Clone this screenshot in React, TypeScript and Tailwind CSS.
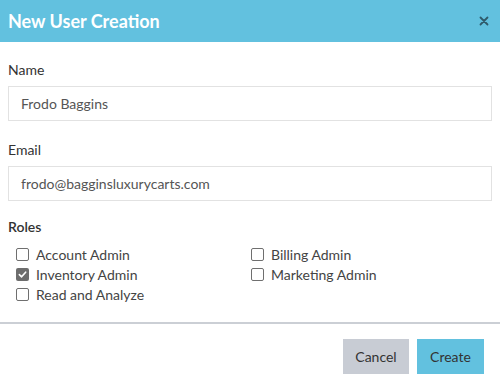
import React from "react";

function Box({ checked }: { checked?: boolean }) {
  if (checked) {
    return (
      <span className="w-[13px] h-[13px] rounded-[2px] bg-[#6d6d6d] flex items-center justify-center shrink-0">
        <svg width="9" height="9" viewBox="0 0 10 10">
          <path d="M1.5 5.2 L4 7.6 L8.5 2.4" stroke="#fff" strokeWidth="1.8" fill="none" strokeLinecap="round" strokeLinejoin="round" />
        </svg>
      </span>
    );
  }
  return <span className="w-[13px] h-[13px] rounded-[2px] border border-[#6f6f6f] bg-white shrink-0" />;
}

function Role({ label, checked }: { label: string; checked?: boolean }) {
  return (
    <label className="flex items-center gap-[7px] h-[20px] text-[14px] text-[#444]">
      <Box checked={checked} />
      <span>{label}</span>
    </label>
  );
}

export default function App() {
  return (
    <div className="w-[500px] h-[390px] bg-white flex flex-col" style={{ fontFamily: '"Lato", "Noto Sans", sans-serif' }}>
      <div className="h-[42px] bg-[#62c1df] flex items-center justify-between pl-[8px] pr-[11px] shrink-0">
        <span className="text-white text-[18px] font-bold">New User Creation</span>
        <svg width="10" height="10" viewBox="0 0 10 10">
          <path d="M1.5 1.5 L8.5 8.5 M8.5 1.5 L1.5 8.5" stroke="#2f5a6a" strokeWidth="1.8" strokeLinecap="round" />
        </svg>
      </div>
      <div className="px-[8px] pt-[18px] flex flex-col">
        <div className="text-[14px] text-[#333] leading-[20px]">Name</div>
        <div className="mt-[6px] h-[35px] border border-[#e2e2e2] flex items-center px-[12px] text-[14px] text-[#555]">Frodo Baggins</div>
        <div className="mt-[19px] text-[14px] text-[#333] leading-[20px]">Email</div>
        <div className="mt-[6px] h-[35px] border border-[#e2e2e2] flex items-center px-[12px] text-[14px] text-[#555]">frodo@bagginsluxurycarts.com</div>
        <div className="mt-[16px] text-[14px] font-semibold text-[#333] leading-[20px]">Roles</div>
        <div className="mt-[7px] pl-[8px] grid grid-cols-[235px_1fr]">
          <Role label="Account Admin" />
          <Role label="Billing Admin" />
          <Role label="Inventory Admin" checked />
          <Role label="Marketing Admin" />
          <Role label="Read and Analyze" />
        </div>
      </div>
      <div className="mt-[18px] h-[2px] bg-[#cbcfd5]" />
      <div className="flex justify-end gap-[8px] pr-[16px] pt-[15px]">
        <button className="w-[66px] h-[35px] bg-[#c8ccd4] text-[14px] text-[#333]">Cancel</button>
        <button className="w-[67px] h-[35px] bg-[#62c1df] text-[14px] text-[#333]">Create</button>
      </div>
    </div>
  );
}
